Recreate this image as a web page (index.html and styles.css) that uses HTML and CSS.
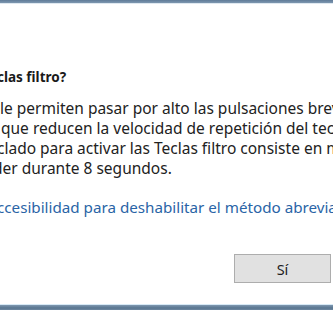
FILE: index.html
```html
<!DOCTYPE html>
<html lang="es">
<head>
<meta charset="utf-8">
<title>Teclas filtro</title>
<link rel="stylesheet" href="styles.css">
</head>
<body>
<div class="dialog">
  <div class="frame-top"></div>
  <div class="content">
    <h1 class="title"><span class="cut cut-title">clas filtro?</span></h1>
    <div class="message">
      <div class="line"><span class="cut cut-1">le permiten pasar por alto las pulsaciones brev</span></div>
      <div class="line"><span class="cut cut-2">que reducen la velocidad de repetición del tec</span></div>
      <div class="line"><span class="cut cut-3">clado para activar las Teclas filtro consiste en m</span></div>
      <div class="line"><span class="cut cut-4">der durante 8 segundos.</span></div>
    </div>
    <div class="link-line"><a class="link cut cut-link" href="#">ccesibilidad para deshabilitar el método abrevia</a></div>
  </div>
  <div class="actions">
    <button class="btn" type="button">Sí</button>
  </div>
  <div class="frame-bottom"></div>
</div>
</body>
</html>
```
FILE: styles.css
```css
html, body {
  margin: 0;
  padding: 0;
  background: #ffffff;
}
body {
  width: 333px;
  height: 310px;
  overflow: hidden;
  font-family: "Segoe UI", "Noto Sans", "Open Sans", sans-serif;
  color: #222222;
}
.dialog {
  display: flex;
  flex-direction: column;
  height: 310px;
}
.frame-top {
  height: 3px;
  background: linear-gradient(#5f7b98, #7e97b0);
  border-bottom: 1px solid #dfe8f0;
}
.content {
  padding-top: 63px;
  flex: 1;
}
.title {
  margin: 0;
  font-size: 13.5px;
  font-weight: 700;
  line-height: 20px;
  white-space: nowrap;
  color: #1a1a1a;
}
.message {
  margin-top: 11px;
  font-size: 15.5px;
  line-height: 20px;
}
.line {
  white-space: nowrap;
}
.cut {
  display: inline-block;
  white-space: nowrap;
}
.cut-title { margin-left: -3px; }
.cut-1 { margin-left: 0; }
.cut-2 { margin-left: 1px; }
.cut-3 { margin-left: -3px; }
.cut-4 { margin-left: -7px; }
.link-line {
  margin-top: 19px;
  font-size: 15.2px;
  line-height: 20px;
  white-space: nowrap;
}
.link {
  color: #2a64a6;
  text-decoration: none;
}
.cut-link { margin-left: -3px; }
.actions {
  display: flex;
  justify-content: flex-end;
  padding-right: 2px;
  padding-bottom: 21px;
}
.btn {
  width: 97px;
  height: 29px;
  background: #e1e1e1;
  border: 1px solid #adadad;
  font-family: "Segoe UI", "Noto Sans", sans-serif;
  font-size: 14.5px;
  color: #1e1e1e;
  padding: 0;
}
.frame-bottom {
  height: 5px;
  border-top: 1px solid #d8eaf6;
  background: linear-gradient(#7f98b0, #587590 60%, #7089a2);
}
```
